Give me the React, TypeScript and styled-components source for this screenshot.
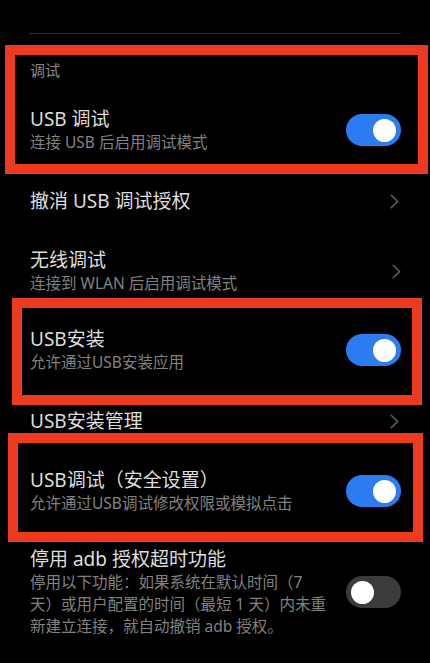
import React from 'react';
import styled, { createGlobalStyle } from 'styled-components';

const GlobalStyle = createGlobalStyle`
  html, body {
    margin: 0;
    padding: 0;
    background: #000;
  }
  body {
    font-family: "Noto Sans", "Noto Sans CJK SC", sans-serif;
    text-spacing-trim: space-all;
    -webkit-font-smoothing: antialiased;
  }
`;

type Item = {
  title: string;
  desc?: string;
  kind: 'switch' | 'link';
  on?: boolean;
};

function App() {
  return (
    <>
      <GlobalStyle />
      <Page>
        <Divider />
        <Highlight $inset="11px 2px -4px 5px">
          <SectionHeader>调试</SectionHeader>
          <SettingRow
            item={{
              title: 'USB 调试',
              desc: '连接 USB 后启用调试模式',
              kind: 'switch',
              on: true,
            }}
          />
        </Highlight>
        <SettingRow item={{ title: '撤消 USB 调试授权', kind: 'link' }} />
        <SettingRow
          item={{
            title: '无线调试',
            desc: '连接到 WLAN 后启用调试模式',
            kind: 'link',
          }}
        />
        <Highlight $inset="-13px 8px -15px 12px">
          <SettingRow
            item={{
              title: 'USB安装',
              desc: '允许通过USB安装应用',
              kind: 'switch',
              on: true,
            }}
          />
        </Highlight>
        <SettingRow item={{ title: 'USB安装管理', kind: 'link' }} />
        <Highlight $inset="-19px 7px -11px 8px">
          <SettingRow
            item={{
              title: 'USB调试（安全设置）',
              desc: '允许通过USB调试修改权限或模拟点击',
              kind: 'switch',
              on: true,
            }}
          />
        </Highlight>
        <SettingRow
          item={{
            title: '停用 adb 授权超时功能',
            desc: '停用以下功能：如果系统在默认时间（7 天）或用户配置的时间（最短 1 天）内未重新建立连接，就自动撤销 adb 授权。',
            kind: 'switch',
            on: false,
          }}
        />
      </Page>
    </>
  );
}

function SettingRow({ item }: { item: Item }) {
  return (
    <Row $single={!item.desc}>
      <TextBox>
        <Title>{item.title}</Title>
        {item.desc && <Desc>{item.desc}</Desc>}
      </TextBox>
      {item.kind === 'switch' ? (
        <Switch $on={!!item.on}>
          <Knob />
        </Switch>
      ) : (
        <Chevron width="9" height="15" viewBox="0 0 9 15">
          <polyline points="1.2,1.2 7.6,7.5 1.2,13.8" />
        </Chevron>
      )}
    </Row>
  );
}

const Page = styled.div`
  min-height: 663px;
  padding-top: 33px;
  overflow: hidden;
`;

const Divider = styled.div`
  height: 1px;
  margin: 0 29px 0 29px;
  background: #2e2e2e;
`;

const Highlight = styled.div<{ $inset: string }>`
  position: relative;

  &::after {
    content: '';
    position: absolute;
    inset: ${({ $inset }) => $inset};
    border: 10px solid #ee3a1f;
    pointer-events: none;
  }
`;

const SectionHeader = styled.div`
  padding: 26px 30px 11px;
  font-size: 15px;
  line-height: 20px;
  color: #8a8a8a;
`;

const Row = styled.div<{ $single: boolean }>`
  display: flex;
  align-items: center;
  justify-content: space-between;
  gap: 16px;
  padding: ${({ $single }) => ($single ? '19px 31px 19px 30px' : '16px 29px 17px 30px')};
`;

const TextBox = styled.div`
  display: flex;
  flex-direction: column;
  max-width: 300px;
`;

const Title = styled.div`
  font-size: 19px;
  line-height: 24px;
  color: #dedede;
`;

const Desc = styled.div`
  font-size: 15.5px;
  line-height: 22px;
  color: #828282;
`;

const Switch = styled.div<{ $on: boolean }>`
  flex-shrink: 0;
  width: 55px;
  height: 32px;
  border-radius: 16px;
  box-sizing: border-box;
  padding: 0 5px;
  display: flex;
  align-items: center;
  justify-content: ${({ $on }) => ($on ? 'flex-end' : 'flex-start')};
  background: ${({ $on }) => ($on ? '#2b7cf0' : '#3b3b3b')};
`;

const Knob = styled.div`
  width: 23px;
  height: 23px;
  border-radius: 50%;
  background: #fff;
`;

const Chevron = styled.svg`
  flex-shrink: 0;
  fill: none;
  stroke: #636363;
  stroke-width: 1.5;
  stroke-linecap: round;
  stroke-linejoin: round;
`;

export default App;
